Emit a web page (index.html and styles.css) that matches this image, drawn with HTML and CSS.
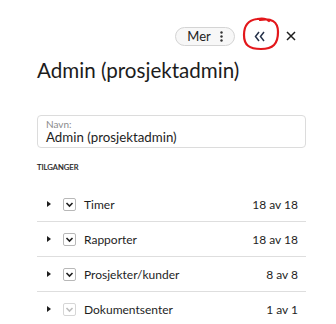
FILE: index.html
```html
<!DOCTYPE html>
<html>
<head>
  <title>Rolle</title>
  <link rel="stylesheet" href="styles.css">
</head>
<body>
  <div class="panel">
    <div class="toolbar">
      <button class="more-btn">Mer
        <svg class="kebab" width="3" height="11" viewBox="0 0 3 11">
          <circle cx="1.5" cy="1.5" r="1.2"/>
          <circle cx="1.5" cy="5.5" r="1.2"/>
          <circle cx="1.5" cy="9.5" r="1.2"/>
        </svg>
      </button>
      <button class="icon-btn collapse-btn">
        <svg width="12" height="11" viewBox="0 0 12 11">
          <path d="M5 1 L1.5 5.5 L5 10 M10 1 L6.5 5.5 L10 10" fill="none" stroke="#26324a" stroke-width="1.5"/>
        </svg>
        <svg class="marker" width="40" height="38" viewBox="0 0 40 38">
          <path d="M19 5 C30 3 37 6 37 17 C37 29 32 34 20 34 C8 34 3 30 3 20 C3 10 8 5 16 4 C21 3 25 3 28 6" fill="none" stroke="#e3171b" stroke-width="2.2" stroke-linecap="round"/>
        </svg>
      </button>
      <button class="icon-btn close-btn">
        <svg width="10" height="10" viewBox="0 0 10 10">
          <path d="M1 1 L9 9 M9 1 L1 9" fill="none" stroke="#1e1e1e" stroke-width="1.5"/>
        </svg>
      </button>
    </div>

    <h1 class="title">Admin (prosjektadmin)</h1>

    <div class="field">
      <label class="field-label">Navn:</label>
      <div class="field-value">Admin (prosjektadmin)</div>
    </div>

    <div class="section-title">TILGANGER</div>

    <div class="access-list">
      <div class="access-row">
        <span class="caret"></span>
        <span class="check"><svg width="9" height="7" viewBox="0 0 9 7"><path d="M1.5 2 L4.5 5 L7.5 2" /></svg></span>
        <span class="access-name">Timer</span>
        <span class="access-count">18 av 18</span>
      </div>
      <div class="access-row">
        <span class="caret"></span>
        <span class="check"><svg width="9" height="7" viewBox="0 0 9 7"><path d="M1.5 2 L4.5 5 L7.5 2" /></svg></span>
        <span class="access-name">Rapporter</span>
        <span class="access-count">18 av 18</span>
      </div>
      <div class="access-row">
        <span class="caret"></span>
        <span class="check"><svg width="9" height="7" viewBox="0 0 9 7"><path d="M1.5 2 L4.5 5 L7.5 2" /></svg></span>
        <span class="access-name">Prosjekter/kunder</span>
        <span class="access-count">8 av 8</span>
      </div>
      <div class="access-row">
        <span class="caret"></span>
        <span class="check disabled"><svg width="9" height="7" viewBox="0 0 9 7"><path d="M1.5 2 L4.5 5 L7.5 2" /></svg></span>
        <span class="access-name">Dokumentsenter</span>
        <span class="access-count">1 av 1</span>
      </div>
    </div>
  </div>
</body>
</html>
```

FILE: styles.css
```css
body {
  margin: 0;
  font-family: Lato, "Noto Sans", sans-serif;
  color: #1e1e1e;
  background: #fff;
}

.panel {
  padding: 19px 30px 0 37px;
}

.toolbar {
  display: flex;
  justify-content: flex-end;
  align-items: center;
  gap: 5px;
  height: 34px;
  margin-right: 5px;
}

button {
  font-family: inherit;
  background: none;
  border: none;
  padding: 0;
  cursor: pointer;
}

.more-btn {
  display: flex;
  align-items: center;
  justify-content: center;
  gap: 9px;
  width: 60px;
  height: 19px;
  margin-right: 4px;
  border: 1px solid #d4d4d4;
  border-radius: 10px;
  background: #f7f7f7;
  font-size: 13px;
  color: #222;
}

.kebab {
  fill: #333;
}

.icon-btn {
  display: flex;
  align-items: center;
  justify-content: center;
  height: 30px;
}

.collapse-btn {
  position: relative;
  width: 32px;
}

.marker {
  position: absolute;
  left: -3px;
  top: -6px;
}

.close-btn {
  width: 20px;
}

.title {
  margin: 5px 0 0;
  font-size: 20.6px;
  font-weight: 400;
  line-height: 24px;
  color: #1c1c1c;
}

.field {
  margin-top: 33px;
  border: 1px solid #dcdcdc;
  border-radius: 4px;
  padding: 2px 8px 3px;
}

.field-label {
  display: block;
  font-size: 10px;
  line-height: 12px;
  color: #8a8a8a;
}

.field-value {
  font-size: 13.3px;
  line-height: 14px;
  color: #1e1e1e;
}

.section-title {
  margin-top: 14px;
  font-size: 7.6px;
  line-height: 10px;
  font-weight: 400;
  color: #1e1e1e;
  -webkit-text-stroke: 0.2px #1e1e1e;
}

.access-list {
  margin-top: 15px;
}

.access-row {
  display: flex;
  align-items: center;
  height: 34px;
  padding: 0 8px 0 10px;
  border-bottom: 1px solid #dedede;
  font-size: 12px;
}

.access-row:last-child {
  border-bottom: none;
}

.caret {
  width: 0;
  height: 0;
  border-top: 3.5px solid transparent;
  border-bottom: 3.5px solid transparent;
  border-left: 4px solid #1e1e1e;
  margin-right: 12px;
}

.check {
  display: flex;
  align-items: center;
  justify-content: center;
  width: 11px;
  height: 11px;
  border: 1px solid #b8b8b8;
  border-radius: 2px;
  margin-right: 8px;
}

.check path {
  fill: none;
  stroke: #1e1e1e;
  stroke-width: 1.6;
}

.check.disabled {
  border-color: #d6d6d6;
}

.check.disabled path {
  stroke: #bdbdbd;
}

.access-name {
  flex: 1;
}

.access-count {
  color: #1e1e1e;
}
```
